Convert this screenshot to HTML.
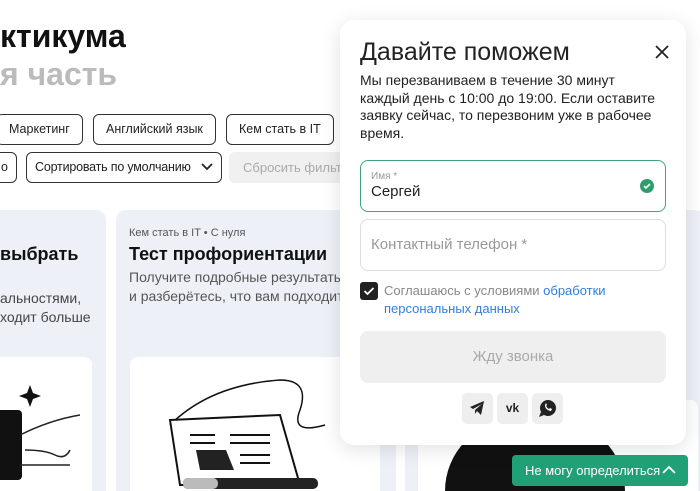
<!DOCTYPE html>
<html><head><meta charset="utf-8"><style>
*{box-sizing:border-box;margin:0;padding:0}
html,body{width:700px;height:491px;overflow:hidden}
body{background:#fff;font-family:"Liberation Sans","Noto Sans CJK SC",sans-serif;position:relative;color:#222}
.a{position:absolute}
.chip{position:absolute;height:31px;border:1px solid #333;border-radius:6px;font-size:12.5px;line-height:29px;padding:0 12px;background:#fff;color:#222;white-space:nowrap}
.card{position:absolute;background:#edf1f7;border-radius:10px 10px 0 0}
.img{position:absolute;background:#fff;border-radius:8px 8px 0 0}
</style></head><body>
<div class="a" style="left:0;top:18px;font-size:32px;font-weight:bold;color:#111">ктикума</div>
<div class="a" style="left:0;top:56px;font-size:32px;font-weight:bold;color:#bbb">я часть</div>
<div class="chip" style="left:-4px;top:114px">Маркетинг</div>
<div class="chip" style="left:93px;top:114px">Английский язык</div>
<div class="chip" style="left:226px;top:114px">Кем стать в IT</div>
<div class="chip" style="left:-20px;top:152px;padding:0 8px 0 20px">о</div>
<div class="chip" style="left:26px;top:152px;width:196px;padding:0 0 0 8px;letter-spacing:-0.2px">Сортировать по умолчанию<svg class="a" style="right:8px;top:10px" width="12" height="8"><path d="M1 1l5 5 5-5" stroke="#222" stroke-width="1.8" fill="none"/></svg></div>
<div class="a" style="left:229px;top:152px;width:130px;height:31px;border-radius:6px;background:#f0f0f0;color:#aaa;font-size:13px;line-height:31px;padding-left:14px;white-space:nowrap;overflow:hidden">Сбросить фильтры</div>
<div class="card" style="left:-20px;top:210px;width:126px;height:281px"></div>
<div class="a" style="left:0;top:244px;font-size:18px;font-weight:bold;color:#111">выбрать</div>
<div class="a" style="left:0;top:289px;font-size:14px;line-height:19px;color:#444">альностями,<br>ходит больше</div>
<div class="img" style="left:-10px;top:357px;width:102px;height:134px"></div>
<svg class="a" style="left:0;top:385px" width="92" height="100"><rect x="-10" y="25" width="32" height="70" rx="4" fill="#111"/><path d="M30 0l3 8 8 3-8 3-3 8-3-8-8-3 8-3z" fill="#111"/><path d="M20 50q30-15 60-20M25 65q20 0 30 5q10 5 15-5M20 80h50" stroke="#222" fill="none" stroke-width="1.5"/></svg>
<div class="card" style="left:116px;top:210px;width:280px;height:281px"></div>
<div class="a" style="left:129px;top:227px;font-size:11px;color:#555">Кем стать в IT • С нуля</div>
<div class="a" style="left:129px;top:244px;font-size:18px;font-weight:bold;color:#111">Тест профориентации</div>
<div class="a" style="left:129px;top:268px;font-size:14px;line-height:19px;color:#555;white-space:nowrap">Получите подробные результаты<br>и разберётесь, что вам подходит</div>
<div class="img" style="left:130px;top:357px;width:250px;height:134px"></div>
<svg class="a" style="left:140px;top:375px" width="210" height="116"><path d="M30 50q40-40 110-45q30 0 20 30q-10 25 25 15" stroke="#111" fill="none" stroke-width="1.5"/><path d="M30 45l110-5 20 70H40z" stroke="#111" fill="#fff" stroke-width="2"/><path d="M50 60h25M50 68h25M90 60h40M90 68h40M100 80h30M100 88h30" stroke="#111" stroke-width="2"/><path d="M56 75h30l8 20H60z" fill="#222"/><rect x="43" y="103" width="135" height="11" rx="5" fill="#222"/><rect x="43" y="103" width="35" height="11" rx="5" fill="#bbb"/></svg>
<div class="card" style="left:405px;top:210px;width:300px;height:281px"></div>
<div class="img" style="left:418px;top:400px;width:280px;height:91px"></div>
<div class="a" style="left:445px;top:420px;width:180px;height:71px;border-radius:90px 90px 0 0;background:#111"></div>
<div class="a" style="left:340px;top:20px;width:346px;height:425px;background:#fff;border-radius:14px;box-shadow:0 4px 20px rgba(0,0,0,.12)"></div>
<div class="a" style="left:360px;top:38px;font-size:25px;color:#222">Давайте поможем</div>
<svg class="a" style="left:655px;top:45px" width="14" height="14"><path d="M1 1l12 12M13 1L1 13" stroke="#222" stroke-width="1.8"/></svg>
<div class="a" style="left:360px;top:72px;width:300px;font-size:14px;line-height:17.5px;color:#222">Мы перезваниваем в течение 30 минут каждый день с 10:00 до 19:00. Если оставите заявку сейчас, то перезвоним уже в рабочее время.</div>
<div class="a" style="left:360px;top:160px;width:306px;height:52px;border:1px solid #3fa37e;border-radius:8px"></div>
<div class="a" style="left:371px;top:171px;font-size:10px;color:#999">Имя *</div>
<div class="a" style="left:371px;top:183px;font-size:15px;color:#222">Сергей</div>
<svg class="a" style="left:640px;top:179px" width="14" height="14"><circle cx="7" cy="7" r="7" fill="#2e9e6e"/><path d="M4 7l2 2 4-4" stroke="#fff" stroke-width="1.6" fill="none"/></svg>
<div class="a" style="left:360px;top:219px;width:306px;height:52px;border:1px solid #ddd;border-radius:8px"></div>
<div class="a" style="left:371px;top:236px;font-size:15px;color:#999">Контактный телефон *</div>
<svg class="a" style="left:360px;top:282px" width="18" height="18"><rect width="18" height="18" rx="3" fill="#222"/><path d="M4.5 9l3 3 6-6" stroke="#fff" stroke-width="1.8" fill="none"/></svg>
<div class="a" style="left:384px;top:282px;font-size:13px;line-height:18px;color:#888">Соглашаюсь с условиями <span style="color:#2f7fe0">обработки<br>персональных данных</span></div>
<div class="a" style="left:360px;top:331px;width:306px;height:52px;background:#efefef;border-radius:8px;text-align:center;line-height:52px;font-size:15px;color:#aaa">Жду звонка</div>
<div class="a" style="left:462px;top:393px;width:31px;height:31px;background:#eee;border-radius:5px"><svg style="margin:8px" width="15" height="14"><path d="M0 6l14-6-3 14-4-4-2 3v-4l7-6-9 5z" fill="#222"/></svg></div>
<div class="a" style="left:497px;top:393px;width:31px;height:31px;background:#eee;border-radius:5px;text-align:center;font-weight:bold;font-size:12px;line-height:31px;color:#222">vk</div>
<div class="a" style="left:532px;top:393px;width:31px;height:31px;background:#eee;border-radius:5px"><svg style="margin:6px" width="19" height="19"><circle cx="10" cy="9" r="8" fill="#222"/><path d="M3 13l-2 5 5-2z" fill="#222"/><path d="M7 6q0 5 6 6l1-2-2-1-1 1q-2-1-3-3l1-1-1-2z" fill="#fff"/></svg></div>
<div class="a" style="left:512px;top:455px;width:176px;height:31px;background:#20a077;border-radius:4px;color:#fff;font-size:13px;line-height:31px;padding-left:13px;white-space:nowrap">Не могу определиться<svg class="a" style="right:12px;top:10px" width="14" height="9"><path d="M1 8l6-6 6 6" stroke="#fff" stroke-width="1.8" fill="none"/></svg></div>
</body></html>
